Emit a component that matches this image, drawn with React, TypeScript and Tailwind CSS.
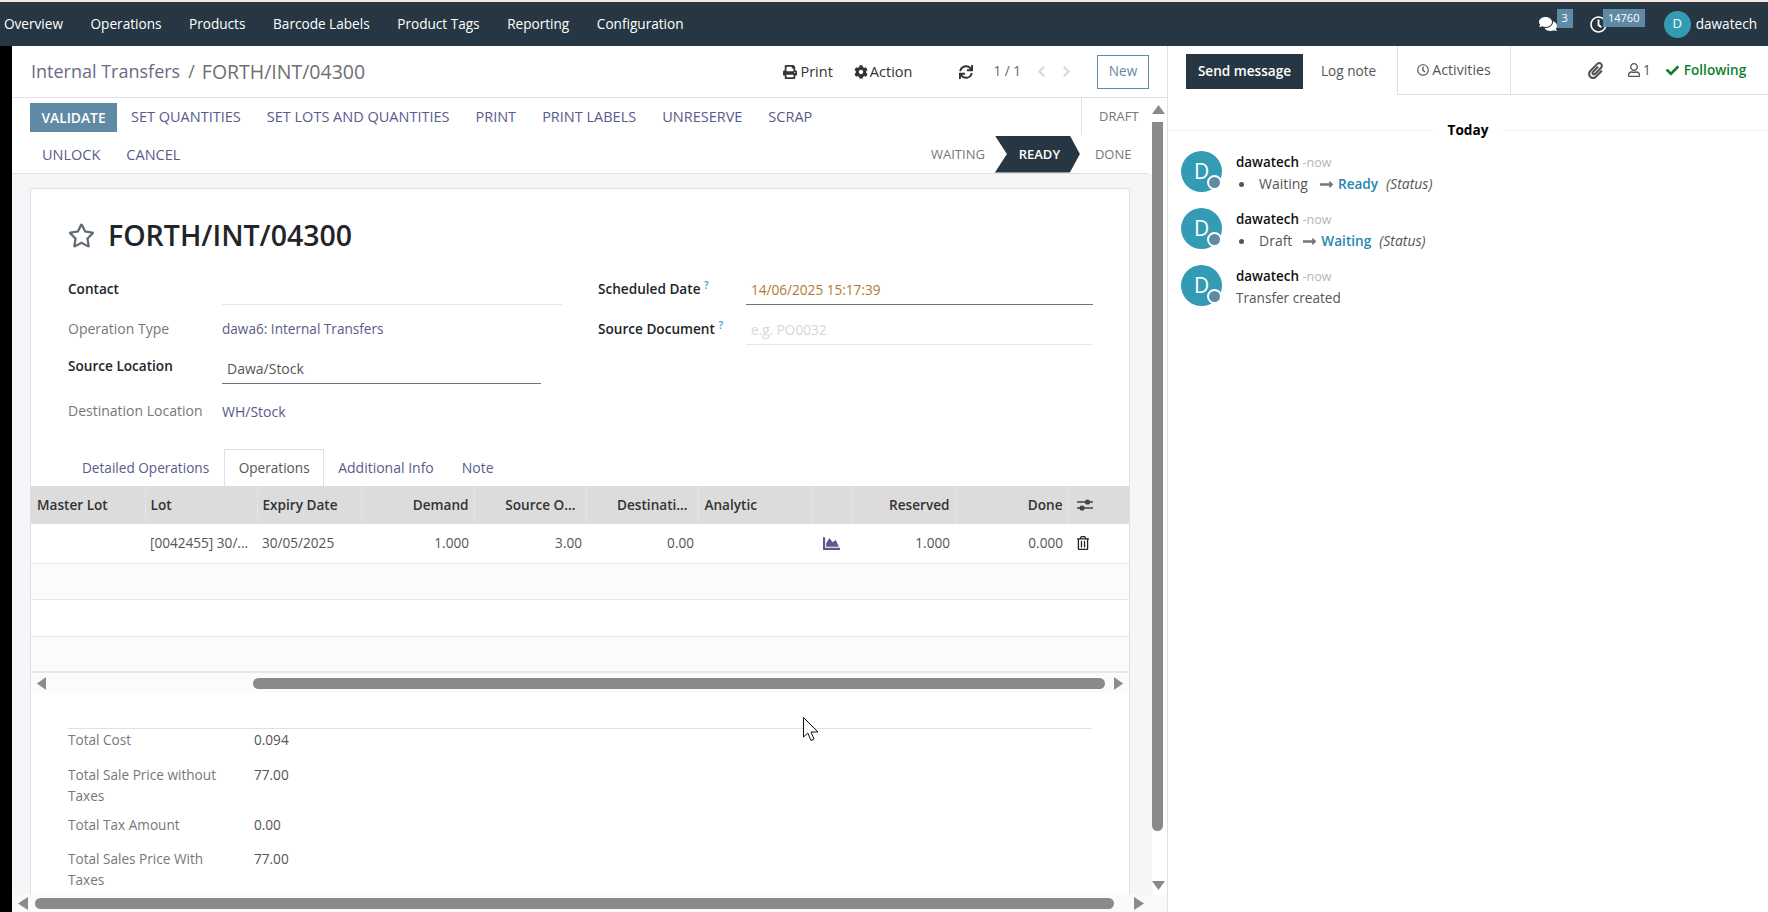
import React from "react";
import {
  FaCheck,
  FaChartArea,
  FaCog,
  FaComments,
  FaLongArrowAltRight,
  FaPaperclip,
  FaPrint,
  FaRegClock,
  FaRegStar,
  FaRegTrashAlt,
  FaRegUser,
  FaSync,
} from "react-icons/fa";
import { ChevronLeft, ChevronRight } from "lucide-react";

const MENU = ["Overview", "Operations", "Products", "Barcode Labels", "Product Tags", "Reporting", "Configuration"];

const COLS = [
  { label: "Master Lot", w: "w-[114px]", cls: "pl-[6px] text-left" },
  { label: "Lot", w: "w-[112px]", cls: "pl-[5px] text-left" },
  { label: "Expiry Date", w: "w-[104px]", cls: "pl-[5px] text-left" },
  { label: "Demand", w: "w-[113px]", cls: "pr-[5px] text-right" },
  { label: "Source O...", w: "w-[112px]", cls: "pr-[10px] text-right" },
  { label: "Destinati...", w: "w-[112px]", cls: "pr-[10px] text-right" },
  { label: "Analytic", w: "w-[113px]", cls: "pl-[6px] text-left" },
  { label: "", w: "w-[40px]", cls: "" },
  { label: "Reserved", w: "w-[104px]", cls: "pr-[5px] text-right" },
  { label: "Done", w: "w-[113px]", cls: "pr-[5px] text-right" },
];

const TOTALS = [
  { label: "Total Cost", value: "0.094", cls: "" },
  { label: "Total Sale Price without Taxes", value: "77.00", cls: "mt-[14px]" },
  { label: "Total Tax Amount", value: "0.00", cls: "mt-[8px]" },
  { label: "Total Sales Price With Taxes", value: "77.00", cls: "mt-[13px]" },
];

const Tri = ({ dir, className }: { dir: "up" | "down" | "left" | "right"; className?: string }) => {
  const pts = { up: "5,0 10,9 0,9", down: "0,0 10,0 5,9", left: "9,0 9,10 0,5", right: "0,0 9,5 0,10" }[dir];
  const box = dir === "up" || dir === "down" ? "0 0 10 9" : "0 0 9 10";
  return (
    <svg viewBox={box} preserveAspectRatio="none" className={className}>
      <polygon points={pts} fill="#8a8a8a" />
    </svg>
  );
};

const Sliders = () => (
  <svg viewBox="0 0 16 14" className="h-[14px] w-[16px]">
    <path d="M0 4h16M0 10h16" stroke="#444" strokeWidth="1.4" />
    <circle cx="10.5" cy="4" r="2.6" fill="#444" />
    <circle cx="5" cy="10" r="2.6" fill="#444" />
  </svg>
);

const Message = ({ children }: { children: React.ReactNode }) => (
  <div className="flex h-[57px] pl-[13px]">
    <div className="relative flex size-[41px] shrink-0 items-center justify-center rounded-full bg-[#339bb3] text-[21px] text-white">
      D
      <span className="absolute left-[26px] top-[24px] size-[15px] rounded-full border-2 border-white bg-[#5f8aa6]" />
    </div>
    <div className="ml-[14px] leading-[22px]">
      <div className="text-[#111]">
        <span className="text-[13.4px] font-semibold">dawatech</span> <span className="text-[12.5px] text-[#b5b5b5]">-now</span>
      </div>
      <div className="-mt-px">{children}</div>
    </div>
  </div>
);

const StatusLine = ({ from, to, gap }: { from: string; to: string; gap: string }) => (
  <div className="flex items-center text-[14px] text-[#555]">
    <span className="ml-[3px] size-[5px] rounded-full bg-[#555]" />
    <span className="ml-[15px]">{from}</span>
    <FaLongArrowAltRight className={`size-[15px] text-[#777] ${gap}`} />
    <span className="ml-[4px] text-[13.6px] font-semibold text-[#2a85ad]">{to}</span>
    <span className="ml-[8px] italic">(Status)</span>
  </div>
);

export default function App() {
  return (
    <div className="relative flex h-[912px] w-[1768px] flex-col overflow-hidden bg-white font-['Open_Sans',sans-serif] text-[13.6px] text-[#555]">
      <div className="h-[2px] bg-[#f8e8e4]" />

      {/* top menu */}
      <header className="flex h-[44px] items-center bg-[#263743] pl-[4px] pr-[11px] text-white">
        <nav className="flex gap-[27.6px] pt-[1px]">
          {MENU.map((m) => (
            <span key={m}>{m}</span>
          ))}
        </nav>
        <div className="ml-auto flex items-center">
          <FaComments className="size-[18px]" />
          <span className="mb-[12px] flex h-[19px] w-[16px] items-center justify-center bg-[#5f8aa6] text-[11px]">3</span>
          <FaRegClock className="ml-[17px] size-[17px]" />
          <span className="-ml-[4px] mb-[12px] flex h-[18px] w-[42px] items-center justify-center bg-[#5f8aa6] text-[11px]">14760</span>
          <span className="ml-[19px] flex size-[27px] items-center justify-center rounded-full bg-[#339bb3] text-[13px]">D</span>
          <span className="ml-[5px]">dawatech</span>
        </div>
      </header>

      <main className="flex min-h-0 flex-1">
        <div className="w-[12px] shrink-0 bg-black" />

        {/* form side */}
        <section className="flex w-[1156px] shrink-0 flex-col border-r border-[#dee2e6]">
          <div className="flex h-[52px] shrink-0 items-center border-b border-[#dee2e6] pl-[19px] pr-[18px]">
            <span className="text-[18px] text-[#6b6a85]">Internal Transfers</span>
            <span className="ml-[8px] text-[18px] text-[#6f6f6f]">/</span>
            <span className="ml-[7px] text-[19.5px] text-[#6f6f6f]">FORTH/INT/04300</span>
            <div className="ml-auto flex items-center text-[14.5px] text-[#333]">
              <FaPrint className="size-[14px]" />
              <span className="ml-[3px]">Print</span>
              <FaCog className="ml-[21px] size-[14px]" />
              <span className="ml-[2px]">Action</span>
              <FaSync className="ml-[47px] size-[14px]" />
              <span className="ml-[20px] text-[13.6px] text-[#666]">1 / 1</span>
              <ChevronLeft strokeWidth={3} className="ml-[12px] size-[17px] text-[#d5d8dc]" />
              <ChevronRight strokeWidth={3} className="ml-[8px] size-[17px] text-[#d5d8dc]" />
              <span className="ml-[22px] flex h-[34px] w-[52px] items-center justify-center border border-[#5f8aa6] text-[13.6px] text-[#5f8aa6]">New</span>
            </div>
          </div>

          <div className="flex min-h-0 flex-1">
            <div className="flex w-[1140px] shrink-0 flex-col">
              {/* action buttons and status */}
              <div className="flex h-[76px] w-[1136px] shrink-0 border-b border-[#dee2e6] text-[14.5px] leading-[27px] text-[#5b5a8c]">
                <div className="pl-[18px] pt-[5px]">
                  <div className="flex h-[29px] items-start gap-[26px]">
                    <span className="-mr-[12px] flex h-[29px] w-[87px] items-center justify-center bg-[#5f8aa6] text-[13.8px] font-semibold text-white">VALIDATE</span>
                    <span>SET QUANTITIES</span>
                    <span>SET LOTS AND QUANTITIES</span>
                    <span>PRINT</span>
                    <span>PRINT LABELS</span>
                    <span>UNRESERVE</span>
                    <span>SCRAP</span>
                  </div>
                  <div className="mt-[9px] flex h-[29px] items-start gap-[26px] pl-[12px]">
                    <span>UNLOCK</span>
                    <span>CANCEL</span>
                  </div>
                </div>
                <div className="ml-auto flex w-[217px] flex-col text-[13px] text-[#777]">
                  <div className="ml-[150px] flex h-[37px] items-center border-l border-[#dee2e6] pl-[17px]">DRAFT</div>
                  <div className="flex h-[38px] items-center">
                    <span>WAITING</span>
                    <span className="ml-[10px] flex h-[37px] w-[85px] items-center justify-center bg-[#263743] pl-[4px] font-semibold text-white [clip-path:polygon(0_0,75px_0,85px_50%,75px_100%,0_100%,12px_50%)]">READY</span>
                    <span className="ml-[15px]">DONE</span>
                  </div>
                </div>
              </div>

              {/* sheet */}
              <div className="min-h-0 flex-1 overflow-hidden bg-[#f5f6f8] pl-[18px] pt-[14px]">
                <div className="h-[800px] w-[1100px] border-x border-t border-[#dee2e6] bg-white">
                  <div className="ml-[37px] mt-[26px] flex h-[40px] items-center">
                    <FaRegStar className="size-[27px] text-[#5f6b76]" />
                    <h1 className="ml-[13px] text-[28.5px] font-semibold text-[#212529]">FORTH/INT/04300</h1>
                  </div>

                  <div className="ml-[37px] mt-[17px] flex gap-[36px]">
                    <div className="w-[494px]">
                      <div className="flex h-[33px] items-center">
                        <span className="mt-[1px] w-[154px] font-semibold text-[#212529]">Contact</span>
                        <span className="h-[33px] flex-1 border-b border-[#e6e8eb]" />
                      </div>
                      <div className="flex h-[48px] items-center">
                        <span className="mb-[1px] w-[154px] text-[14px] text-[#777]">Operation Type</span>
                        <span className="mt-[1px] text-[#5b5a8c]">dawa6: Internal Transfers</span>
                      </div>
                      <div className="flex h-[31px] items-center">
                        <span className="mb-[5px] w-[154px] font-semibold text-[#212529]">Source Location</span>
                        <span className="flex h-[31px] w-[319px] items-center border-b border-[#6b7280] pl-[5px] text-[14px]">Dawa/Stock</span>
                      </div>
                      <div className="flex h-[54px] items-center">
                        <span className="mb-[1px] w-[154px] text-[14px] text-[#777]">Destination Location</span>
                        <span className="text-[14px] text-[#5b5a8c]">WH/Stock</span>
                      </div>
                    </div>
                    <div className="w-[495px]">
                      <div className="flex h-[33px] items-center">
                        <span className="mt-[1px] w-[148px] font-semibold text-[#212529]">
                          Scheduled Date <sup className="text-[10px] text-[#3a9bc0]">?</sup>
                        </span>
                        <span className="flex h-[33px] flex-1 items-center border-b border-[#6b7280] pl-[5px] pt-[4px] text-[#b07a2f]">14/06/2025 15:17:39</span>
                      </div>
                      <div className="flex h-[40px] items-center pt-[8px]">
                        <span className="w-[148px] font-semibold text-[#212529]">
                          Source Document <sup className="text-[10px] text-[#3a9bc0]">?</sup>
                        </span>
                        <span className="flex h-[32px] flex-1 items-center border-b border-[#e6e8eb] pl-[5px] pt-[3px] text-[#d5d7db]">e.g. PO0032</span>
                      </div>
                    </div>
                  </div>

                  {/* tabs */}
                  <div className="ml-[37px] mt-[11px] flex h-[37px] items-center text-[#5b5a8c]">
                    <span className="px-[14px] pt-[1px]">Detailed Operations</span>
                    <span className="ml-px flex h-[37px] w-[100px] items-center justify-center border-x border-t border-[#dee2e6] pt-[1px] text-[#555]">Operations</span>
                    <span className="px-[14px] text-[14px]">Additional Info</span>
                    <span className="px-[14px] text-[14px]">Note</span>
                  </div>

                  <table className="w-[1098px] table-fixed border-collapse">
                    <colgroup>
                      {COLS.map((c, i) => (
                        <col key={i} className={c.w} />
                      ))}
                      <col className="w-[61px]" />
                    </colgroup>
                    <thead>
                      <tr className="h-[38px] bg-[#dcdcdc] text-[#333]">
                        {COLS.map((c, i) => (
                          <th key={i} className={`border-r border-[#e2e4e8] font-semibold ${c.cls}`}>{c.label}</th>
                        ))}
                        <th className="pl-[8px] text-left">
                          <Sliders />
                        </th>
                      </tr>
                    </thead>
                    <tbody>
                      <tr className="h-[39px] border-b border-[#e6e8eb]">
                        <td />
                        <td className="whitespace-nowrap pl-[5px]">[0042455] 30/...</td>
                        <td className="pl-[5px]">30/05/2025</td>
                        <td className="pr-[5px] text-right">1.000</td>
                        <td className="pr-[4px] text-right">3.00</td>
                        <td className="pr-[4px] text-right">0.00</td>
                        <td />
                        <td className="pl-[12px]">
                          <FaChartArea className="size-[17px] text-[#5b5a8c]" />
                        </td>
                        <td className="pr-[5px] text-right">1.000</td>
                        <td className="pr-[5px] text-right">0.000</td>
                        <td className="pl-[8px]">
                          <FaRegTrashAlt className="size-[14px] text-[#222]" />
                        </td>
                      </tr>
                      <tr className="h-[36px] border-b border-[#e6e8eb] bg-[#fbfbfb]"><td colSpan={11} /></tr>
                      <tr className="h-[37px] border-b border-[#e6e8eb]"><td colSpan={11} /></tr>
                      <tr className="h-[36px] border-b-2 border-[#e6e8eb] bg-[#fbfbfb]"><td colSpan={11} /></tr>
                    </tbody>
                  </table>

                  {/* list scrollbar */}
                  <div className="flex h-[20px] w-[1098px] items-center bg-[#fbfbfb] pl-[6px]">
                    <Tri dir="left" className="h-[13px] w-[9px]" />
                    <div className="ml-[207px] h-[11px] w-[852px] rounded-full bg-[#8a8a8a]" />
                    <Tri dir="right" className="ml-[9px] h-[13px] w-[9px]" />
                  </div>

                  <div className="mx-[37px] mt-[35px] border-t border-[#dee2e6] leading-[21px]">
                    {TOTALS.map((t) => (
                      <div key={t.label} className={`flex ${t.cls}`}>
                        <span className="w-[186px] pr-[30px] text-[#777]">{t.label}</span>
                        <span>{t.value}</span>
                      </div>
                    ))}
                  </div>
                </div>
              </div>
            </div>

            {/* page scrollbar */}
            <div className="flex w-[15px] shrink-0 flex-col pt-[7px]">
              <Tri dir="up" className="h-[9px] w-[13px]" />
              <div className="mt-[8px] h-[709px] w-[11px] rounded-b-full rounded-t-[4px] bg-[#8a8a8a]" />
              <Tri dir="down" className="mt-[50px] h-[9px] w-[13px]" />
            </div>
          </div>

          <div className="flex h-[17px] shrink-0 items-center bg-[#fafafa] pl-[6px]">
            <Tri dir="left" className="h-[13px] w-[10px]" />
            <div className="ml-[7px] h-[11px] w-[1079px] rounded-full bg-[#8a8a8a]" />
            <Tri dir="right" className="ml-[20px] h-[13px] w-[10px]" />
          </div>
        </section>

        {/* chatter */}
        <aside className="min-w-0 flex-1">
          <div className="flex h-[49px]">
            <div className="flex w-[229px] items-start pl-[18px] pt-[8px]">
              <span className="flex h-[35px] w-[117px] items-center justify-center bg-[#263743] font-semibold text-white">Send message</span>
              <span className="ml-[18px] mt-[7px]">Log note</span>
            </div>
            <div className="flex w-[114px] items-center justify-center border-x border-b border-[#dee2e6] text-[14.2px]">
              <FaRegClock className="size-[12px]" />
              <span className="ml-[3px]">Activities</span>
            </div>
            <div className="flex flex-1 items-center border-b border-[#dee2e6]">
              <FaPaperclip className="ml-[76px] size-[17px]" />
              <FaRegUser className="ml-[23px] size-[14px]" />
              <span className="ml-[2px]">1</span>
              <FaCheck className="ml-[15px] size-[13px] text-[#0a7f2e]" />
              <span className="ml-[5px] font-semibold text-[#0a7f2e]">Following</span>
            </div>
          </div>

          <div className="mt-[25px] flex h-[20px] items-center">
            <span className="h-px flex-1 bg-[#f0f0f0]" />
            <span className="px-[14px] font-bold text-black">Today</span>
            <span className="h-px flex-1 bg-[#f0f0f0]" />
          </div>

          <div className="mt-[11px]">
            <Message>
              <StatusLine from="Waiting" to="Ready" gap="ml-[11px]" />
            </Message>
            <Message>
              <StatusLine from="Draft" to="Waiting" gap="ml-[10px]" />
            </Message>
            <Message>
              <div>Transfer created</div>
            </Message>
          </div>
        </aside>
      </main>

      {/* mouse pointer caught in the capture */}
      <svg viewBox="0 0 16 25" className="absolute left-[803px] top-[717px] h-[25px] w-[16px]">
        <path d="M0.5 0.5 L0.5 20 L4.8 16 L8 23.5 L11 22 L8 15 L15 15 Z" fill="#fff" stroke="#111" strokeWidth="1" />
      </svg>
    </div>
  );
}
